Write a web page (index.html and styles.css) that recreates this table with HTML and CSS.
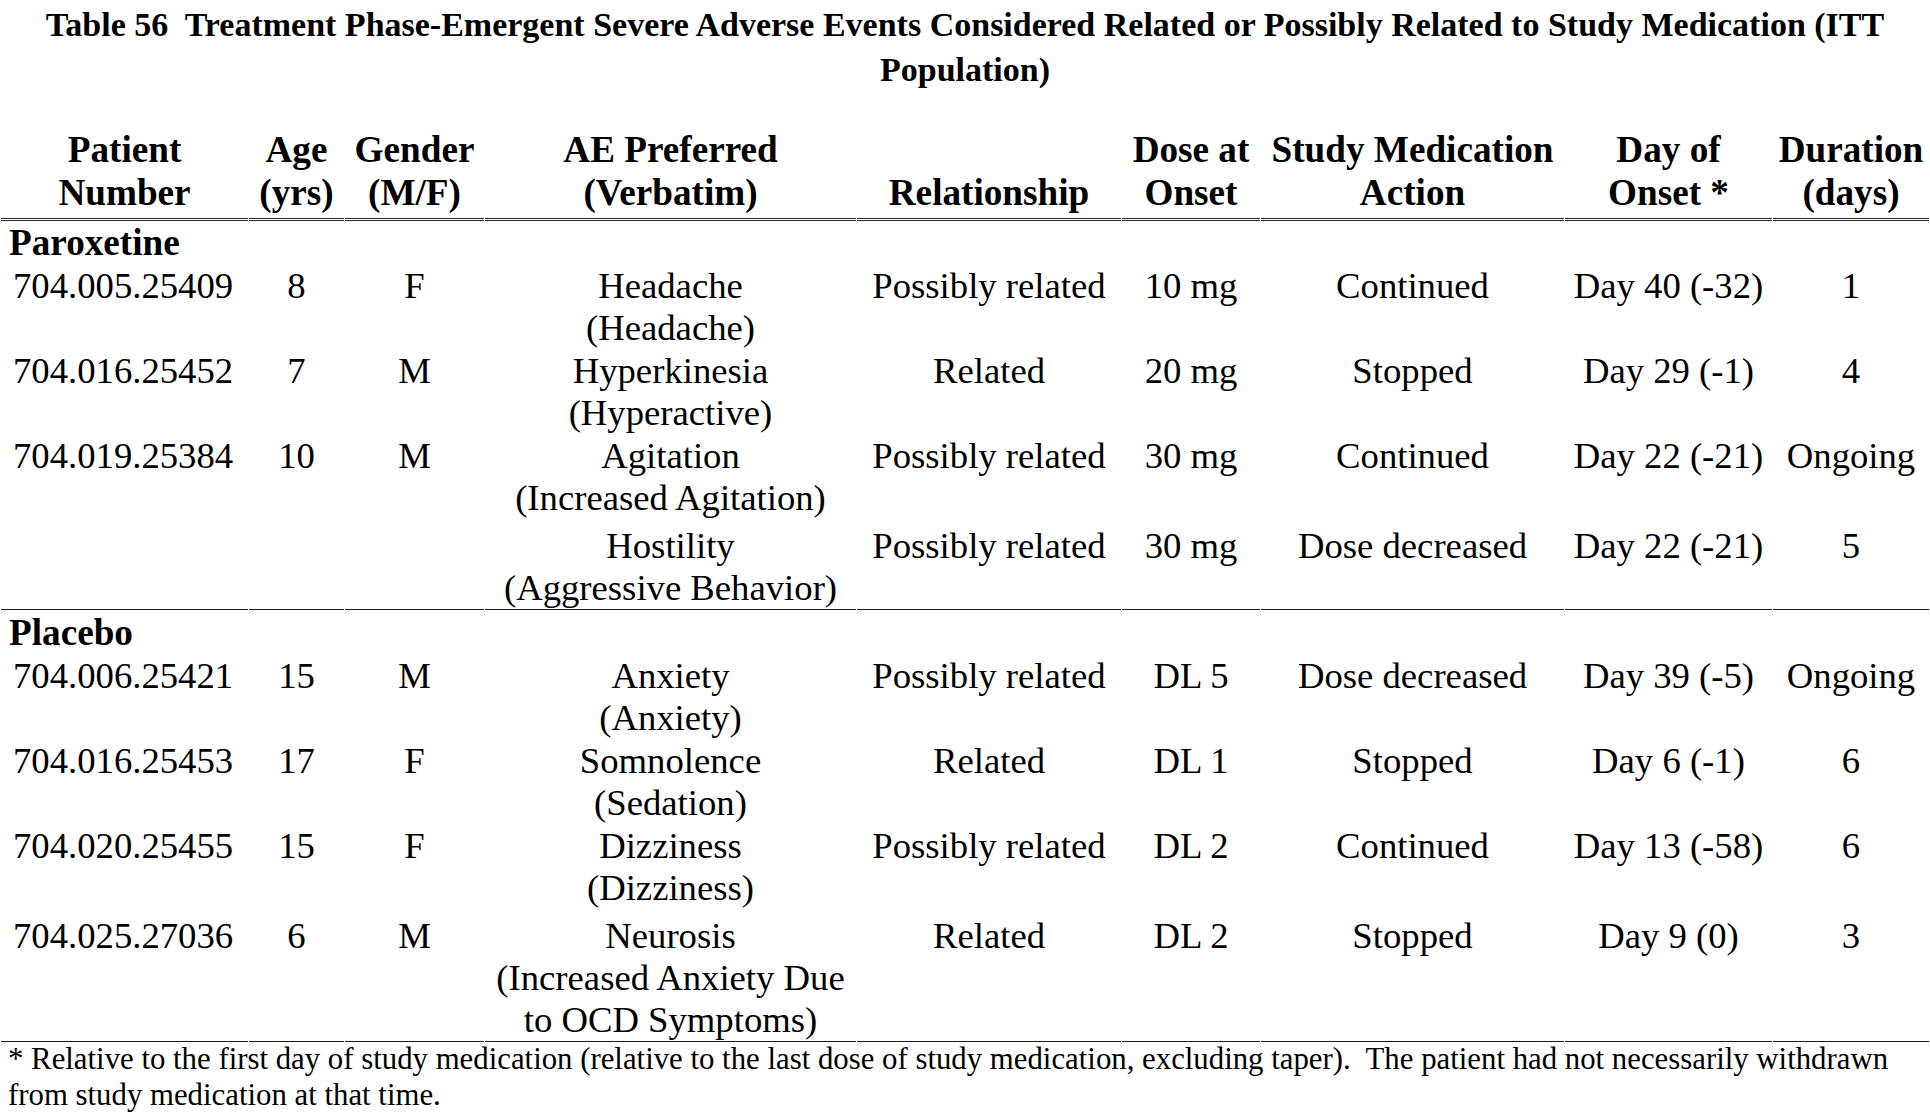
FILE: index.html
```html
<!DOCTYPE html>
<html lang="en">
<head>
<meta charset="utf-8">
<title>Table 56</title>
<link rel="stylesheet" href="styles.css">
</head>
<body>
<div class="page">
  <h1 class="title">Table 56&nbsp; Treatment Phase-Emergent Severe Adverse Events Considered Related or Possibly Related to Study Medication (ITT Population)</h1>
  <table class="ae-table">
    <colgroup>
      <col class="c-patient">
      <col class="c-age">
      <col class="c-gender">
      <col class="c-ae">
      <col class="c-rel">
      <col class="c-dose">
      <col class="c-action">
      <col class="c-day">
      <col class="c-dur">
    </colgroup>
    <thead>
      <tr>
        <th>Patient<br>Number</th>
        <th>Age<br>(yrs)</th>
        <th>Gender<br>(M/F)</th>
        <th>AE Preferred<br>(Verbatim)</th>
        <th>Relationship</th>
        <th>Dose at<br>Onset</th>
        <th>Study Medication<br>Action</th>
        <th>Day of<br>Onset *</th>
        <th>Duration<br>(days)</th>
      </tr>
    </thead>
    <tbody>
      <tr class="group first"><td colspan="9">Paroxetine</td></tr>
      <tr>
        <td class="pid">704.005.25409</td><td>8</td><td>F</td><td>Headache<br>(Headache)</td><td>Possibly related</td><td>10 mg</td><td>Continued</td><td>Day 40 (-32)</td><td>1</td>
      </tr>
      <tr>
        <td class="pid">704.016.25452</td><td>7</td><td>M</td><td>Hyperkinesia<br>(Hyperactive)</td><td>Related</td><td>20 mg</td><td>Stopped</td><td>Day 29 (-1)</td><td>4</td>
      </tr>
      <tr>
        <td class="pid">704.019.25384</td><td>10</td><td>M</td><td>Agitation<br>(Increased Agitation)</td><td>Possibly related</td><td>30 mg</td><td>Continued</td><td>Day 22 (-21)</td><td>Ongoing</td>
      </tr>
      <tr class="spaced ruled">
        <td class="pid"></td><td></td><td></td><td>Hostility<br>(Aggressive Behavior)</td><td>Possibly related</td><td>30 mg</td><td>Dose decreased</td><td>Day 22 (-21)</td><td>5</td>
      </tr>
      <tr class="group"><td colspan="9">Placebo</td></tr>
      <tr>
        <td class="pid">704.006.25421</td><td>15</td><td>M</td><td>Anxiety<br>(Anxiety)</td><td>Possibly related</td><td>DL 5</td><td>Dose decreased</td><td>Day 39 (-5)</td><td>Ongoing</td>
      </tr>
      <tr>
        <td class="pid">704.016.25453</td><td>17</td><td>F</td><td>Somnolence<br>(Sedation)</td><td>Related</td><td>DL 1</td><td>Stopped</td><td>Day 6 (-1)</td><td>6</td>
      </tr>
      <tr>
        <td class="pid">704.020.25455</td><td>15</td><td>F</td><td>Dizziness<br>(Dizziness)</td><td>Possibly related</td><td>DL 2</td><td>Continued</td><td>Day 13 (-58)</td><td>6</td>
      </tr>
      <tr class="spaced ruled">
        <td class="pid">704.025.27036</td><td>6</td><td>M</td><td>Neurosis<br>(Increased Anxiety Due to OCD Symptoms)</td><td>Related</td><td>DL 2</td><td>Stopped</td><td>Day 9 (0)</td><td>3</td>
      </tr>
    </tbody>
  </table>
  <p class="footnote">* Relative to the first day of study medication (relative to the last dose of study medication, excluding taper).&nbsp; The patient had not necessarily withdrawn from study medication at that time.</p>
</div>
</body>
</html>
```

FILE: styles.css
```css
html, body {
  margin: 0;
  padding: 0;
  background: #ffffff;
}

body {
  font-family: "Liberation Serif", "Times New Roman", serif;
  color: #000000;
}

.page {
  width: 1930px;
}

.title {
  margin: 0;
  padding: 2px 20px 0;
  font-size: 34px;
  line-height: 45px;
  font-weight: bold;
  text-align: center;
}

.ae-table {
  margin-top: 36px;
  width: 1930px;
  table-layout: fixed;
  border-collapse: separate;
  border-spacing: 1px 0;
  font-size: 36.7px;
  line-height: 42px;
}

.c-patient { width: 247px; }
.c-age { width: 95px; }
.c-gender { width: 139px; }
.c-ae { width: 371px; }
.c-rel { width: 264px; }
.c-dose { width: 138px; }
.c-action { width: 303px; }
.c-day { width: 207px; }
.c-dur { width: 156px; }

.ae-table th {
  font-size: 37.2px;
  font-weight: bold;
  line-height: 43px;
  padding: 0 0 4px;
  text-align: center;
  vertical-align: bottom;
  white-space: nowrap;
  border-bottom: 3px double #2a2a2a;
}

.ae-table td {
  padding: 1px 2px 0;
  text-align: center;
  vertical-align: top;
}

.ae-table td.pid {
  text-align: left;
  padding-left: 12px;
}

.ae-table tr.group td {
  font-size: 37.2px;
  font-weight: bold;
  text-align: left;
  padding: 2px 0 0 8px;
}

.ae-table tr.group.first td {
  padding-top: 1px;
}

.ae-table tr.spaced td {
  padding-top: 6px;
}

.ae-table tr.spaced td.pid {
  padding-left: 12px;
}

.ae-table tr.ruled td {
  border-bottom: 1px solid #1a1a1a;
}

.footnote {
  margin: 0;
  padding: 0 8px;
  font-size: 30.8px;
  line-height: 35.7px;
}
```
